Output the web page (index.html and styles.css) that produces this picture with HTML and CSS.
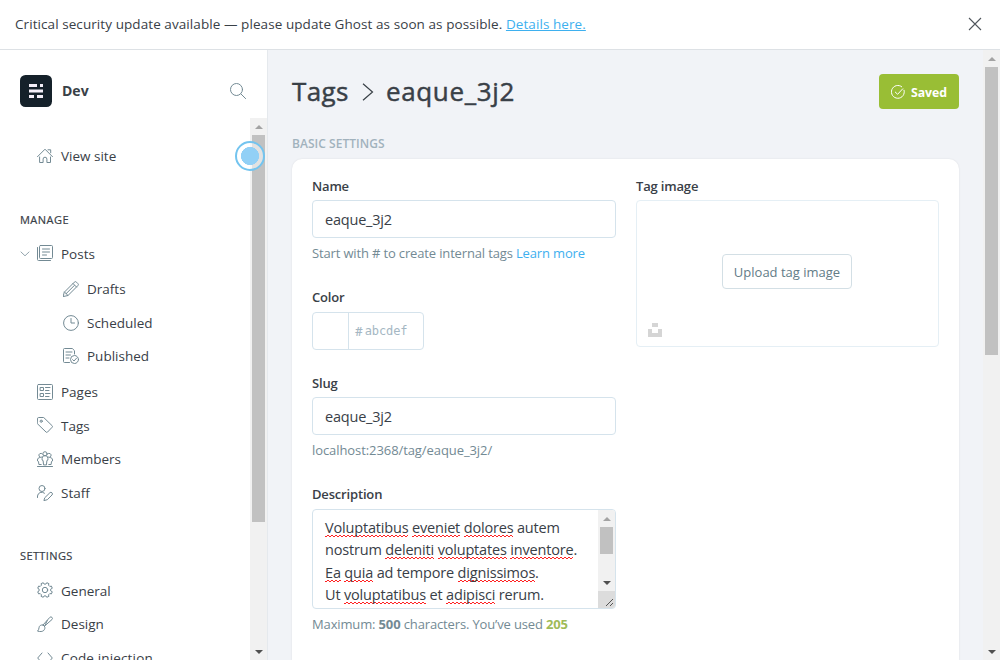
FILE: index.html
```html
<!DOCTYPE html>
<html lang="en">
<head>
<meta charset="utf-8">
<title>Tags - eaque_3j2</title>
<link rel="stylesheet" href="styles.css">
</head>
<body>
<div class="alert"><p class="alert-text">Critical security update available — please update Ghost as soon as possible. <a class="alert-link" href="#">Details here.</a></p>
<svg class="close" width="14" height="14" viewBox="0 0 14 14"><path d="M1 1l12 12M13 1L1 13"/></svg></div>
<div class="app">
<aside class="sidebar">
<header class="brand"><svg class="logo" width="32" height="32" viewBox="0 0 32 32"><rect width="32" height="32" rx="5.5" fill="#15212a"/><path d="M9 9h8v3H9zM20 9h3v3h-3zM9 14.5h14v3H9zM9 20h5v3H9zM17 20h6v3h-6z" fill="#f4eff8"/></svg><span class="brand-name">Dev</span>
<svg class="icon search" viewBox="0 0 16 16"><circle cx="6.5" cy="6.5" r="6"/><path d="M11 11l4.6 4.6"/></svg></header>
<div class="nav-wrap">
<nav class="nav">
<a class="item first"><svg class="icon" viewBox="0 0 16 16"><path d="M.5 8.7L8 1.2l7.5 7.5M2.6 9v5.5h3.5v-3.400a1.800 1.800 0 0 1 3.800 0v3.400h3.600V9M11 1.800h2.700v3"/></svg>View site</a>
<h4 class="heading">Manage</h4>
<a class="item posts"><svg class="chevron" width="10" height="6" viewBox="0 0 10 6"><path d="M.7.7L5 4.800 9.300.7"/></svg><svg class="icon" viewBox="0 0 16 16"><rect x="2.500" y=".5" width="13" height="13" rx="1"/><path d="M.5 2.500v12a1 1 0 0 0 1 1h12M5.500 4h7M5.500 7h7M5.500 10h4"/></svg>Posts</a>
<div class="subnav">
<a class="item"><svg class="icon" viewBox="0 0 16 16"><path d="M1.500 11L11.300 1.200a1.500 1.500 0 0 1 2.200 0l1.300 1.300a1.500 1.500 0 0 1 0 2.200L5 14.500.5 15.500zM10 2.500L13.500 6M3 12.800l8.300-8.300M1.500 11L5 14.500"/></svg>Drafts</a>
<a class="item"><svg class="icon" viewBox="0 0 16 16"><circle cx="8" cy="8" r="7.400"/><path d="M8 3.500V8h3.500"/></svg>Scheduled</a>
<a class="item"><svg class="icon" viewBox="0 0 16 16"><path d="M6.500 14.500h-5a1 1 0 0 1-1-1v-12a1 1 0 0 1 1-1h7.800l2.200 2.200V6M3 4h6M3 7h4.500M3 10h3"/><circle cx="11.500" cy="11.500" r="4"/><path d="M9.600 11.600l1.400 1.400 2.600-2.900"/></svg>Published</a>
</div>
<a class="item"><svg class="icon" viewBox="0 0 16 16"><rect x=".5" y=".5" width="15" height="15" rx="1"/><path d="M3.500 3.500h3v3h-3zM3.500 9.500h3v3h-3zM8.500 3.500H13M8.500 6.500H12M8.500 9.500H13M8.500 12.500H12"/></svg>Pages</a>
<a class="item"><svg class="icon tag-icon" viewBox="0 0 16 16"><path d="M.5 1.500a1 1 0 0 1 1-1h5.200l8.500 8.300a1 1 0 0 1 0 1.400l-4.700 4.900a1 1 0 0 1-1.400 0L.5 6.800z"/><circle cx="4.200" cy="4.200" r="1.100"/></svg>Tags</a>
<a class="item"><svg class="icon" viewBox="0 0 16 16"><circle cx="8" cy="2.800" r="2.100"/><path d="M6.500 13.500l-.4-4-1-.4V7.400a2.900 2.900 0 0 1 5.800 0v1.700l-1 .4-.4 4zM4.600 6.200A2 2 0 1 1 5.400 3M11.400 6.200A2 2 0 1 0 10.600 3M3 6.500C1.500 6.500.5 7.500.5 9v1l1 .5.4 3h2.300M13 6.500c1.500 0 2.500 1 2.500 2.500v1l-1 .5-.4 3h-2.300M.5 15.500h15"/></svg>Members</a>
<a class="item"><svg class="icon" viewBox="0 0 16 16"><circle cx="5" cy="3.500" r="3"/><path d="M.5 12.500V11a4.300 4.300 0 0 1 7-2.800M8 12.500l4.800-4.700a1.400 1.400 0 0 1 2.200 2.200l-4.700 4.700-3 .8z"/></svg>Staff</a>
<h4 class="heading settings">Settings</h4>
<a class="item"><svg class="icon gear" viewBox="0 0 16 16"><path d="M13.930 8.940L15.290 9.750 14.390 11.920 12.850 11.530 11.530 12.850 11.920 14.390 9.750 15.290 8.940 13.930 7.060 13.930 6.250 15.290 4.080 14.390 4.470 12.850 3.150 11.530 1.610 11.920.71 9.750 2.070 8.940 2.070 7.060.71 6.250 1.610 4.080 3.150 4.470 4.470 3.150 4.080 1.610 6.250.71 7.060 2.070 8.940 2.070 9.750.71 11.920 1.610 11.530 3.150 12.850 4.470 14.390 4.080 15.290 6.250 13.930 7.060z"/><circle cx="8" cy="8" r="2.700"/></svg>General</a>
<a class="item"><svg class="icon" viewBox="0 0 16 16"><path d="M6 9l6.800-7.600a1.500 1.500 0 0 1 2.200 2.100L7.300 10.300M6 9l1.500 1.500M6 9c-2-.5-3.800.6-4 2.800-.1 1.500-.6 2.500-1.500 3.300 2.500.8 5 .6 6.300-.7C8 13 8.200 11.500 7.500 10.500L10.300 4.500"/></svg>Design</a>
<a class="item"><svg class="icon" viewBox="0 0 16 16"><path d="M5 3L.7 8 5 13M11 3l4.300 5-4.300 5"/></svg><span class="wide">Code injection</span></a>
</nav>
<div class="scrollbar"><i class="up"></i><i class="thumb side-thumb"></i><i class="down"></i></div>
<i class="pointer"></i>
</div>
</aside>
<main class="main">
<div class="content">
<header class="page-head"><h1 class="title"><span>Tags</span><svg width="12" height="18" viewBox="0 0 12 18"><path d="M1 .8l9.500 8.200L1 17.200"/></svg><span class="tag-name">eaque_3j2</span></h1>
<button class="saved"><svg width="14" height="14" viewBox="0 0 14 14"><path d="M12.900 4.800A6.400 6.400 0 1 1 11 2M4 6.800L6.600 9.300 12 3.500"/></svg><span>Saved</span></button></header>
<h4 class="section">Basic settings</h4>
<section class="card">
<div class="col">
<div class="field name"><label>Name</label><div class="input">eaque_3j2</div><p class="hint">Start with # to create internal tags <a>Learn more</a></p></div>
<div class="field color"><label>Color</label><div class="input swatch"><i></i><b>#</b><span>abcdef</span></div></div>
<div class="field slug"><label>Slug</label><div class="input">eaque_3j2</div><p class="hint url">localhost:2368/tag/eaque_3j2/</p></div>
<div class="field"><label class="description">Description</label><div class="textarea"><p class="copy"><u>Voluptatibus</u> <u>eveniet</u> <u>dolores</u> autem<br>nostrum <u>deleniti</u> <u>voluptates</u> <u>inventore</u>.<br><u>Ea</u> <u>quia</u> ad tempore <u>dignissimos</u>.<br>Ut <u>voluptatibus</u> et <u>adipisci</u> rerum.</p><div class="area-side"><div class="scrollbar"><i class="up"></i><i class="thumb area-thumb"></i><i class="down"></i></div><svg class="grip" width="17" height="17" viewBox="0 0 17 17"><path d="M8 15L15 8M12 15L15 12"/></svg></div></div><p class="hint max">Maximum: <b>500</b> characters. You’ve used <b class="used">205</b></p></div>
</div>
<div class="col"><div class="field"><label class="image-label">Tag image</label><div class="upload"><button class="upload-btn">Upload tag image</button><svg class="unsplash" width="14" height="14" viewBox="0 0 14 14"><path d="M4 0h6v4H4zM0 6h4v4h6V6h4v8H0z"/></svg></div></div></div>
</section>
</div>
<div class="scrollbar"><i class="up"></i><i class="thumb main-thumb"></i><i class="down"></i></div>
</main>
</div>
</body>
</html>
```

FILE: styles.css
```css
* { box-sizing: border-box; }
body { margin: 0; height: 660px; overflow: hidden; display: flex; flex-direction: column; font: 13px/20px "Open Sans", "Noto Sans", sans-serif; color: #394047; background: #fff; }
h1, h4, p { margin: 0; }
svg { flex: none; fill: none; }
.alert { height: 50px; flex: none; border-bottom: 1px solid #dde1e5; padding: 0 18px 2px 15px; display: flex; align-items: center; justify-content: space-between; }
.alert-text { white-space: nowrap; font-size: 13.500px; letter-spacing: .075px; }
.alert-link { color: #3eb0ef; }
.close { stroke: #50565c; stroke-width: 1.1; }
.app { flex: 1; display: flex; min-height: 0; }
.sidebar { width: 268px; flex: none; border-right: 1px solid #e5e9ed; display: flex; flex-direction: column; }
.brand { height: 68px; flex: none; padding: 14px 21px 0 20px; display: flex; align-items: center; }
.brand-name { font-size: 14px; font-weight: 700; margin-left: 10px; flex: 1; }
.icon { width: 16px; height: 16px; stroke: #738a94; stroke-width: 1; stroke-linecap: round; stroke-linejoin: round; }
.tag-icon { margin-top: -2px; }
.gear { margin-top: -2px; }
.nav-wrap { flex: 1; min-height: 0; display: flex; position: relative; }
.nav { flex: 1; overflow: hidden; padding-top: 21px; }
.item { display: flex; align-items: center; gap: 8px; height: 33.6px; padding-left: 37px; white-space: nowrap; font-size: 13.500px; }
.wide { letter-spacing: .15px; }
.posts { padding-left: 20px; gap: 7px; }
.posts .icon { margin: -2px 1px 0 0; }
.chevron { stroke: #93a4ad; }
.subnav { margin: 1.400px 0 2.200px; }
.subnav .item { padding-left: 63px; }
.heading { font-size: 11px; font-weight: 400; line-height: 16px; text-transform: uppercase; padding-left: 20px; margin: 39.400px 0 9.200px; letter-spacing: .48px; -webkit-text-stroke: .2px #394047; }
.heading.settings { margin: 38.400px 0 10.200px; letter-spacing: .38px; }
.scrollbar { width: 17px; flex: none; background: #f1f1f1; display: flex; flex-direction: column; align-items: center; }
.up, .down { flex: none; width: 17px; height: 17px; display: flex; align-items: center; justify-content: center; }
.up::after, .down::after { content: ""; border: 4px solid transparent; border-top-width: 0; border-bottom: 4px solid #a3a3a3; }
.down::after { border-top: 4px solid #505050; border-bottom-width: 0; }
.down { margin-top: auto; }
.thumb { width: 13px; background: #c1c1c1; }
.side-thumb { height: 387px; }
.pointer { position: absolute; left: 235px; top: 23px; width: 30px; height: 30px; border: 2px solid #73c4ef; border-radius: 50%; background: radial-gradient(circle, #92d0f6 0 8.800px, transparent 9.300px), #fff8; }
.main { flex: 1; min-width: 0; background: #f1f3f7; display: flex; }
.content { flex: 1; min-width: 0; padding: 24px 24px 0; overflow: hidden; display: flex; flex-direction: column; }
.page-head { height: 35px; display: flex; justify-content: space-between; align-items: center; }
.title { font-size: 26px; font-weight: 500; line-height: 35px; display: flex; align-items: center; gap: 13px; letter-spacing: .4px; -webkit-text-stroke: .45px #394047; }
.title svg { stroke: #394047; stroke-width: 1.200; margin: 1px -1px 0 0; }
.tag-name { letter-spacing: .65px; }
.saved { width: 80px; height: 35px; border: 0; border-radius: 4px; background: #99be35; color: #fff; font: 700 12.300px/20px "Open Sans", sans-serif; display: flex; align-items: center; justify-content: center; gap: 6px; padding: 0; }
.saved svg { stroke: #fff; stroke-width: 1; }
.saved span { padding-top: 2px; }
.section { margin-top: 25px; font-size: 12px; line-height: 20px; font-weight: 600; text-transform: uppercase; color: #a1b2bd; letter-spacing: .04px; }
.card { margin-top: 5px; background: #fff; border-radius: 10px; box-shadow: 0 0 2px #15171a18; flex: 1; min-height: 510px; padding: 17px 20px; display: grid; grid-template-columns: 304px 303px; gap: 20px; }
label { display: block; font-size: 13px; font-weight: 600; line-height: 20px; margin-bottom: 4px; letter-spacing: -.17px; }
.input { height: 38px; border: 1px solid #d5e3ec; border-radius: 4px; padding: 1px 12px 0; display: flex; align-items: center; font-size: 14.500px; letter-spacing: -.2px; }
.hint { line-height: 18px; padding-top: 6px; font-size: 13px; color: #738a94; white-space: nowrap; letter-spacing: -.15px; }
.hint a { color: #3eb0ef; }
.url { letter-spacing: -.08px; }
.name { height: 111px; }
.color { height: 86px; }
.color label, .description { margin-bottom: 5px; }
.slug { height: 111px; }
.swatch { width: 112px; padding: 0; font: 12px "DejaVu Sans Mono", monospace; color: #a5b7c3; letter-spacing: -.1px; }
.swatch i { width: 36px; height: 36px; border-right: 1px solid #d5e3ec; }
.swatch b { margin: 0 2px 0 6px; font: 600 12px "Open Sans", sans-serif; }
.textarea { height: 100px; border: 1px solid #d5e3ec; border-radius: 4px; display: flex; overflow: hidden; }
.copy { flex: 1; min-width: 0; padding: 7px 0 0 12px; white-space: nowrap; font-size: 14.500px; line-height: 22.400px; letter-spacing: -.18px; }
.copy u { text-decoration: none; background: linear-gradient(90deg, #f22 50%, transparent 50%) 0 100%/4px 1px repeat-x, linear-gradient(90deg, transparent 50%, #f22 50%) 0 calc(100% - 1px)/4px 1px repeat-x; }
.area-side { width: 17px; display: flex; flex-direction: column; }
.area-side .scrollbar { height: 81px; }
.area-thumb { height: 27px; }
.grip { background: #dcdcdc; stroke: #555; }
.max { letter-spacing: -.14px; }
.used { color: #9fbb58; }
.upload { height: 147px; border: 1px solid #e5eff5; border-radius: 4px; display: grid; place-items: center; position: relative; }
.upload-btn { width: 130px; height: 35px; padding: 0; border: 1px solid #d3dfe5; border-radius: 4px; background: #fff; color: #637c87; font: 13px/20px "Open Sans", sans-serif; margin: 0 1px 4px 0; }
.unsplash { position: absolute; left: 11px; bottom: 9px; fill: #d5d5d5; }
.main-thumb { height: 288px; }
```
